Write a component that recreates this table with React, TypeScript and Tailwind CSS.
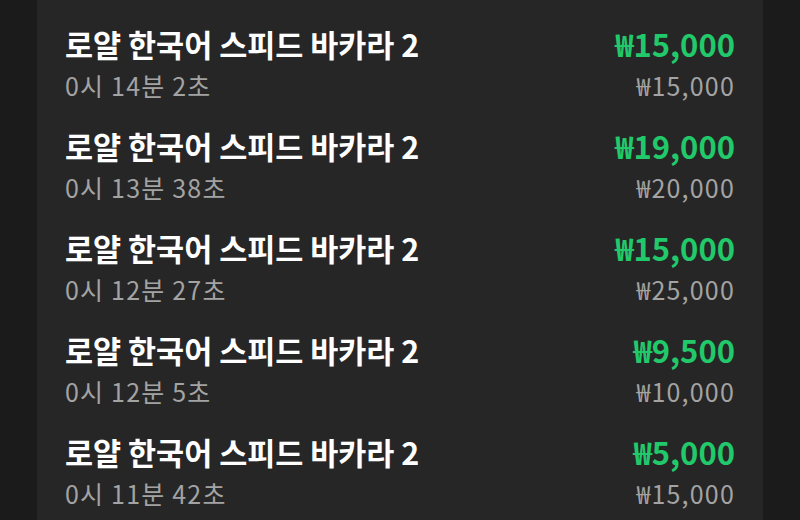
import React from "react";

const rows = [
  { time: "0시 14분 2초", win: "₩15,000", bet: "₩15,000" },
  { time: "0시 13분 38초", win: "₩19,000", bet: "₩20,000" },
  { time: "0시 12분 27초", win: "₩15,000", bet: "₩25,000" },
  { time: "0시 12분 5초", win: "₩9,500", bet: "₩10,000" },
  { time: "0시 11분 42초", win: "₩5,000", bet: "₩15,000" },
];

export default function App() {
  return (
    <div
      className="w-[800px] h-[520px] overflow-hidden bg-[#1b1b1b] flex justify-center"
      style={{ fontFamily: '"Noto Sans CJK KR", "Noto Sans", sans-serif' }}
    >
      <div className="w-[726px] h-full bg-[#262626] pt-[25px] pl-[28px] pr-[28px]">
        {rows.map((r, i) => (
          <div key={i} className="h-[102px] flex justify-between">
            <div>
              <div className="text-[30.5px] leading-[38px] font-bold text-white">
                로얄 한국어 스피드 바카라 2
              </div>
              <div className="mt-[6px] text-[25px] leading-[32px] tracking-[1.2px] text-[#a3a3a3]">
                {r.time}
              </div>
            </div>
            <div className="text-right">
              <div className="text-[31px] leading-[38px] font-bold text-[#22c96b]">
                {r.win}
              </div>
              <div className="mt-[6px] text-[25px] leading-[32px] tracking-[1.2px] text-[#a3a3a3]">
                {r.bet}
              </div>
            </div>
          </div>
        ))}
      </div>
    </div>
  );
}
